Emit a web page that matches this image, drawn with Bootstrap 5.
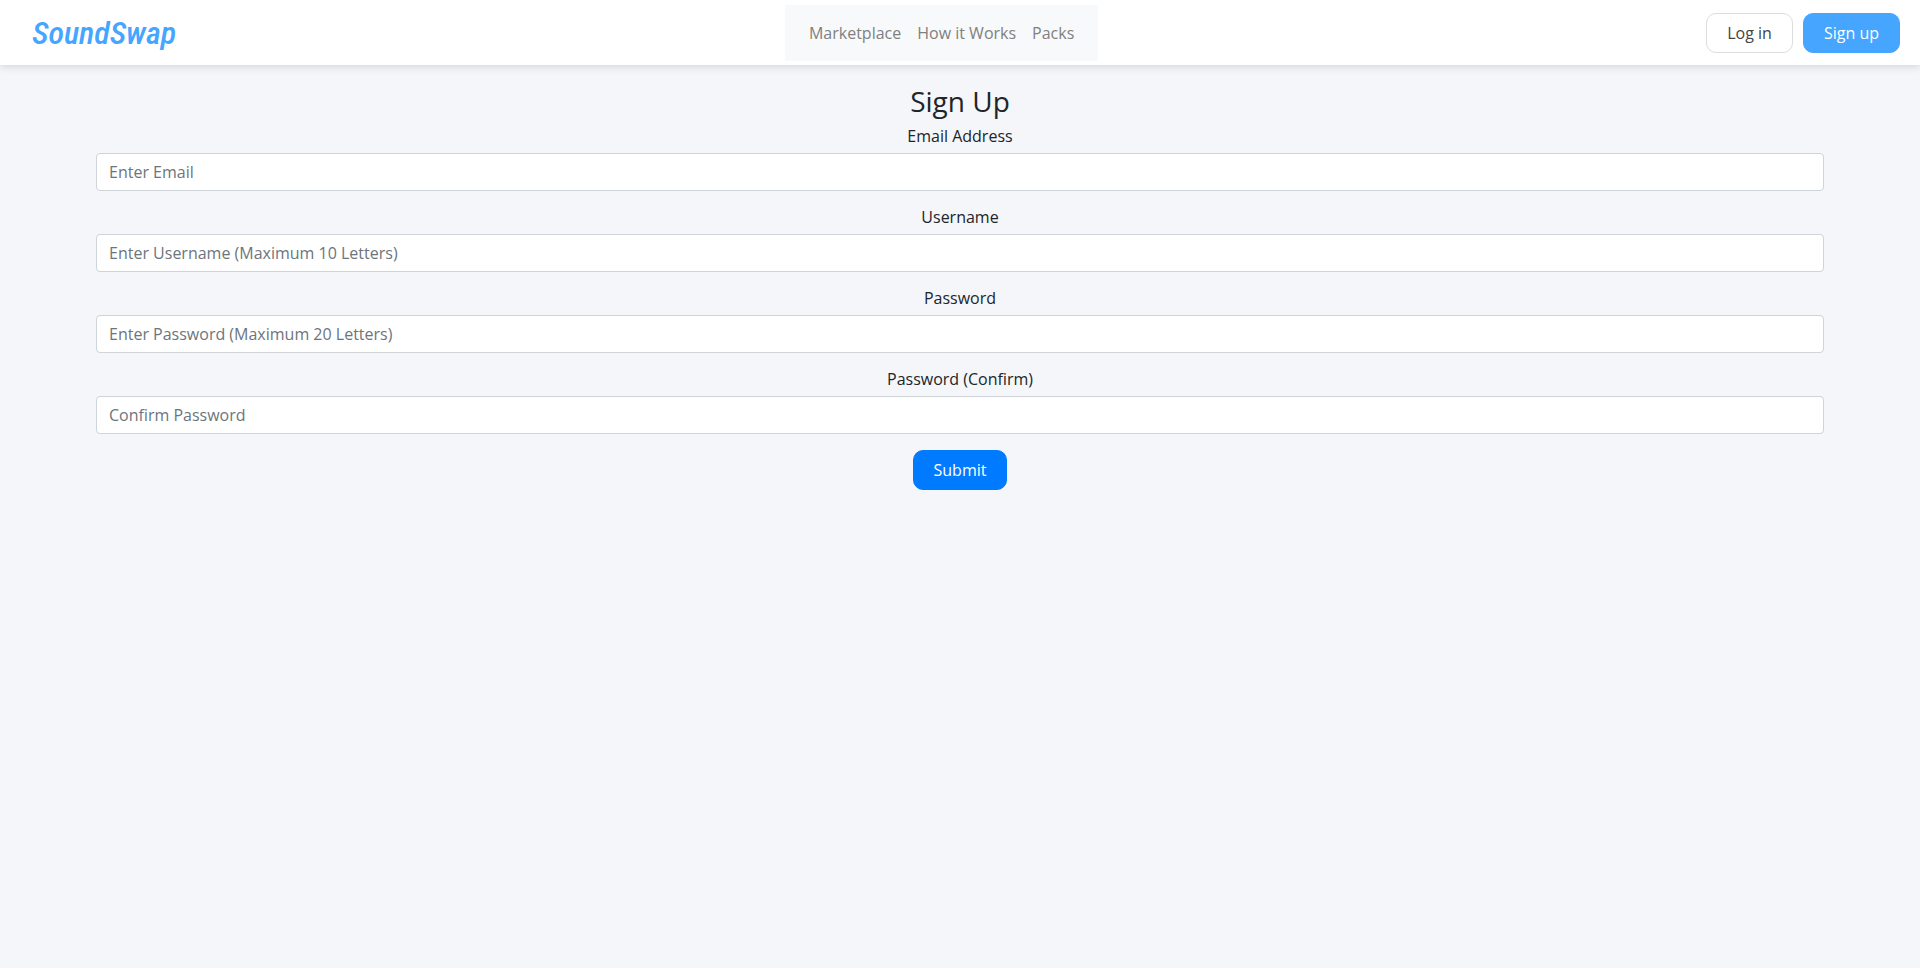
<!DOCTYPE html>
<html lang="en">
<head>
<meta charset="utf-8">
<meta name="viewport" content="width=device-width, initial-scale=1">
<title>SoundSwap - Sign Up</title>
<link href="https://cdn.jsdelivr.net/npm/bootstrap@5.3.0/dist/css/bootstrap.min.css" rel="stylesheet">
<style>
body { font-family: "Open Sans", sans-serif; background: #f4f6fa; color: #212529; }
.site-header { min-height: 65px; padding: 5px 20px 4px 32px; box-shadow: 0 2px 8px rgba(0,0,0,.13); }
.brand { font: italic 500 32px/40px "Roboto Condensed", Roboto, "Liberation Sans", sans-serif; color: #45a5ff; min-width: 145px; }
.main-nav { background: #f8f9fb; padding: 8px 16px; }
.main-nav .nav-link { color: #808080; padding: 8px; }
.account { gap: 10px; }
.btn-pill { border-radius: 10px; padding: 7px 20px; line-height: 24px; }
.btn-login { background: #fff; border-color: #ddd; color: #444; }
.btn-signup { background: #45a5ff; border-color: #45a5ff; color: #fff; }
.btn-submit { background: #007bff; border-color: #007bff; color: #fff; }
.signup { width: 90%; padding-top: 18px; }
.signup h1 { font-size: 28px; line-height: 36px; margin-bottom: 5px; font-weight: 500; }
.field { margin-bottom: 14px; }
.field label { display: block; line-height: 24px; margin-bottom: 5px; }
.field .form-control { border-color: #ced4da; border-radius: 4px; }
.field .form-control::placeholder { color: #6c757d; }
</style>
</head>
<body>
<header class="site-header bg-white d-flex flex-wrap justify-content-between align-items-center">
  <a class="brand text-decoration-none" href="#">SoundSwap</a>
  <nav class="main-nav">
    <ul class="nav">
      <li class="nav-item"><a class="nav-link" href="#">Marketplace</a></li>
      <li class="nav-item"><a class="nav-link" href="#">How it Works</a></li>
      <li class="nav-item"><a class="nav-link" href="#">Packs</a></li>
    </ul>
  </nav>
  <div class="d-flex account">
    <button type="button" class="btn btn-pill btn-login">Log in</button>
    <button type="button" class="btn btn-pill btn-signup">Sign up</button>
  </div>
</header>
<main class="signup mx-auto text-center">
  <h1>Sign Up</h1>
  <form>
    <div class="field">
      <label for="email">Email Address</label>
      <input class="form-control" type="email" id="email" placeholder="Enter Email">
    </div>
    <div class="field">
      <label for="username">Username</label>
      <input class="form-control" type="text" id="username" maxlength="10" placeholder="Enter Username (Maximum 10 Letters)">
    </div>
    <div class="field">
      <label for="password">Password</label>
      <input class="form-control" type="password" id="password" maxlength="20" placeholder="Enter Password (Maximum 20 Letters)">
    </div>
    <div class="field mb-3">
      <label for="confirm">Password (Confirm)</label>
      <input class="form-control" type="password" id="confirm" maxlength="20" placeholder="Confirm Password">
    </div>
    <button type="submit" class="btn btn-pill btn-submit">Submit</button>
  </form>
</main>
<script src="https://cdn.jsdelivr.net/npm/bootstrap@5.3.0/dist/js/bootstrap.bundle.min.js"></script>
</body>
</html>
